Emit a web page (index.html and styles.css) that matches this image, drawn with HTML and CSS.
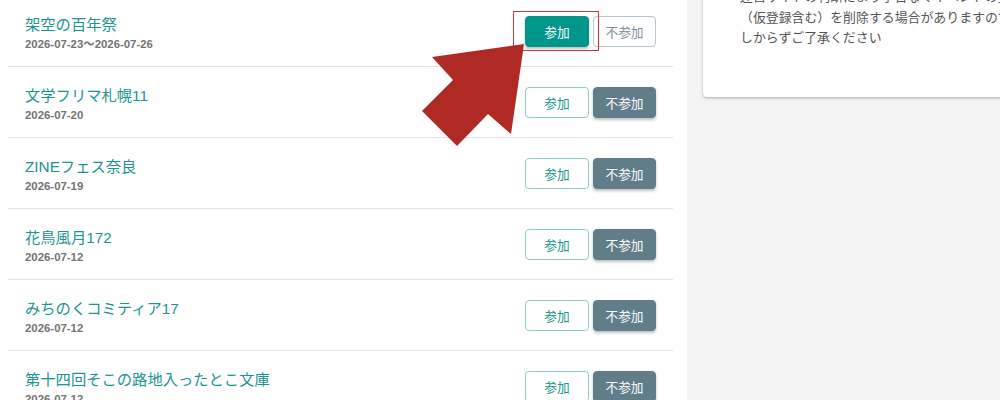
FILE: index.html
```html
<!DOCTYPE html>
<html lang="ja">
<head>
<meta charset="utf-8">
<link rel="stylesheet" href="styles.css">
</head>
<body>
<div class="page">
  <main class="events">
    <ul class="event-list">
      <li class="event">
        <div class="info">
          <div class="title">架空の百年祭</div>
          <div class="date">2026-07-23～2026-07-26</div>
        </div>
        <div class="actions highlighted">
          <button class="btn join-on">参加</button>
          <button class="btn skip-off">不参加</button>
        </div>
      </li>
      <li class="event">
        <div class="info">
          <div class="title">文学フリマ札幌11</div>
          <div class="date">2026-07-20</div>
        </div>
        <div class="actions">
          <button class="btn join-off">参加</button>
          <button class="btn skip-on">不参加</button>
        </div>
      </li>
      <li class="event">
        <div class="info">
          <div class="title">ZINEフェス奈良</div>
          <div class="date">2026-07-19</div>
        </div>
        <div class="actions">
          <button class="btn join-off">参加</button>
          <button class="btn skip-on">不参加</button>
        </div>
      </li>
      <li class="event">
        <div class="info">
          <div class="title">花鳥風月172</div>
          <div class="date">2026-07-12</div>
        </div>
        <div class="actions">
          <button class="btn join-off">参加</button>
          <button class="btn skip-on">不参加</button>
        </div>
      </li>
      <li class="event">
        <div class="info">
          <div class="title">みちのくコミティア17</div>
          <div class="date">2026-07-12</div>
        </div>
        <div class="actions">
          <button class="btn join-off">参加</button>
          <button class="btn skip-on">不参加</button>
        </div>
      </li>
      <li class="event">
        <div class="info">
          <div class="title">第十四回そこの路地入ったとこ文庫</div>
          <div class="date">2026-07-12</div>
        </div>
        <div class="actions">
          <button class="btn join-off">参加</button>
          <button class="btn skip-on">不参加</button>
        </div>
      </li>
    </ul>
  </main>
  <aside class="side">
    <div class="card">
      <ul class="notes">
        <li class="note">
          <span class="line">運営サイトの判断により予告なくイベントの登録</span>
          <span class="line">（仮登録含む）を削除する場合がありますので、あ</span>
          <span class="line">しからずご了承ください</span>
        </li>
      </ul>
    </div>
  </aside>
</div>
<svg class="arrow" width="1000" height="400" viewBox="0 0 1000 400">
  <polygon points="524,44 432,57 453,80 422,111 457,146 488,114 511,134" fill="#b02a25"/>
</svg>
</body>
</html>
```
FILE: styles.css
```css
html, body {
  margin: 0;
  padding: 0;
}
body {
  background: #f4f4f4;
  font-family: "Liberation Sans", "Noto Sans CJK JP", sans-serif;
  width: 1000px;
  height: 400px;
  overflow: hidden;
  position: relative;
}
.page {
  display: flex;
  align-items: flex-start;
  margin-top: -4px;
}
.events {
  flex: none;
  width: 687px;
  background: #fff;
  min-height: 420px;
}
.event-list {
  list-style: none;
  margin: 0 14px 0 8px;
  padding: 0;
}
.event {
  display: flex;
  align-items: center;
  justify-content: space-between;
  height: 70px;
  padding: 0 17px;
  border-bottom: 1px solid #e3e3e3;
}
.info {
  display: flex;
  flex-direction: column;
  padding-top: 4px;
}
.title {
  font-size: 15.3px;
  line-height: 20px;
  color: #1b9592;
}
.date {
  font-size: 11.4px;
  font-weight: bold;
  line-height: 16px;
  color: #737373;
  margin-top: 1px;
}
.actions {
  display: flex;
  gap: 4px;
  position: relative;
  margin-top: 1px;
}
.actions.highlighted::before {
  content: "";
  position: absolute;
  left: -12px;
  top: -5px;
  width: 84px;
  height: 38px;
  border: 1px solid #c8353a;
}
.btn {
  width: 64px;
  height: 31px;
  box-sizing: border-box;
  border-radius: 4px;
  font-family: "Noto Sans CJK JP", sans-serif;
  font-size: 12.7px;
  padding: 0;
  background: #fff;
  cursor: pointer;
}
.join-on {
  background: #00968a;
  border: 1px solid #00968a;
  color: #fff;
  box-shadow: 0 2px 3px rgba(0, 0, 0, 0.25);
}
.join-off {
  border: 1px solid #86d0cb;
  color: #15968d;
}
.skip-off {
  width: 63px;
  border: 1px solid #b8c6cd;
  color: #7f8f98;
}
.skip-on {
  width: 63px;
  background: #617d8a;
  border: 1px solid #617d8a;
  color: #fff;
  box-shadow: 0 2px 3px rgba(0, 0, 0, 0.25);
}
.side {
  flex: none;
  padding-left: 16px;
}
.card {
  margin-top: -20px;
  width: 400px;
  background: #fff;
  border-radius: 4px;
  box-shadow: 0 1px 3px rgba(0, 0, 0, 0.3);
  padding: 10px 0 49px 0;
}
.notes {
  list-style: none;
  margin: 0;
  padding: 0 0 0 25px;
}
.note {
  position: relative;
  padding-left: 12px;
  font-family: "Noto Sans CJK JP", sans-serif;
  font-size: 12.9px;
  line-height: 20.7px;
  color: #555;
}
.note::before {
  content: "・";
  position: absolute;
  left: -6px;
  top: 0;
}
.line {
  display: block;
  white-space: nowrap;
}
.arrow {
  position: absolute;
  left: 0;
  top: 0;
  pointer-events: none;
}
```
